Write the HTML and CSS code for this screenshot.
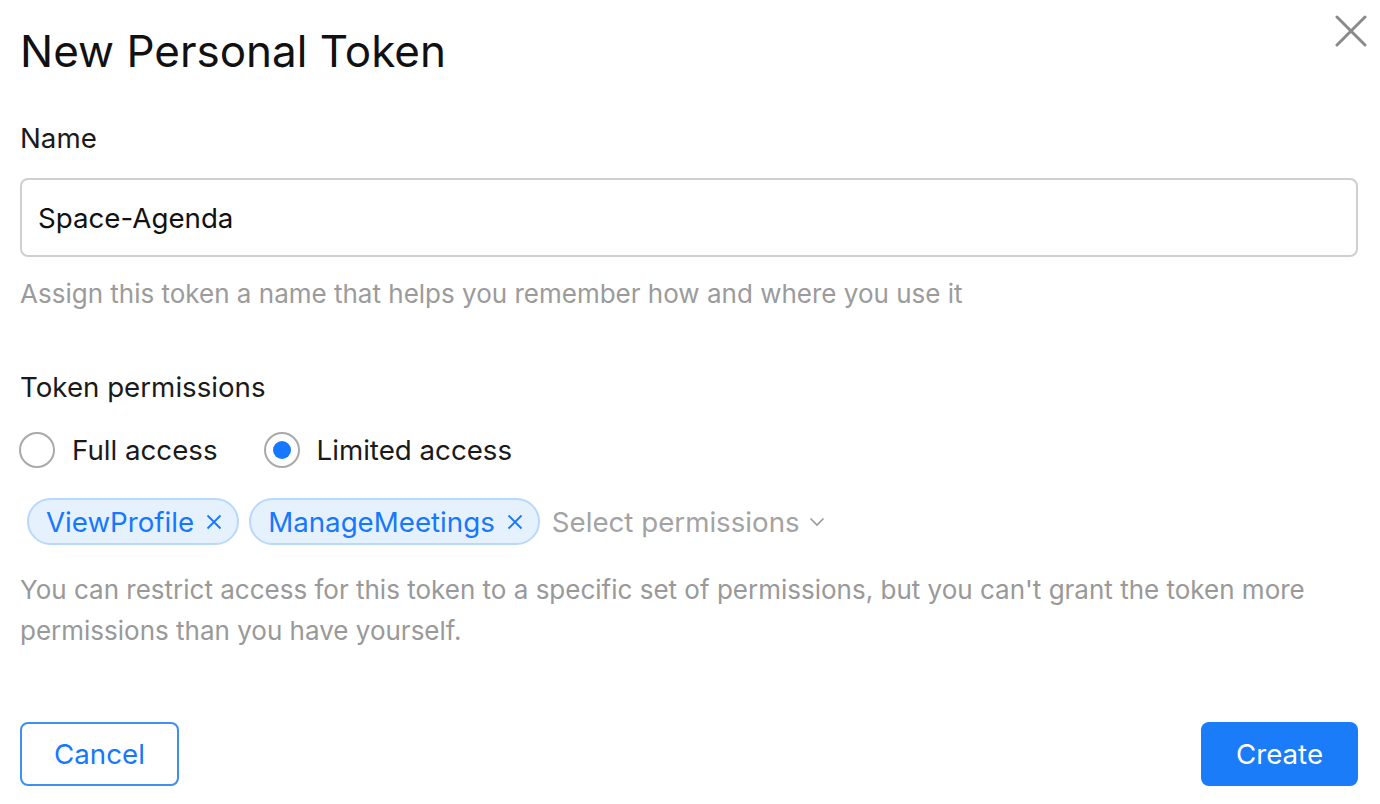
FILE: index.html
```html
<!DOCTYPE html>
<html>
<head>
<meta charset="utf-8">
<link rel="stylesheet" href="styles.css">
</head>
<body>
<div class="dialog">
  <div class="header">
    <h1 class="title">New Personal Token</h1>
    <button class="close" aria-label="Close">
      <svg width="32" height="32" viewBox="0 0 32 32"><path d="M2 2 L30 30 M30 2 L2 30" stroke="#8a8a8a" stroke-width="3" fill="none" stroke-linecap="round"/></svg>
    </button>
  </div>

  <div class="label name-label">Name</div>
  <div class="input">Space-Agenda</div>
  <div class="help">Assign this token a name that helps you remember how and where you use it</div>

  <div class="label perm-label">Token permissions</div>
  <div class="radios">
    <label class="radio"><span class="circle"></span><span>Full access</span></label>
    <label class="radio checked"><span class="circle"></span><span>Limited access</span></label>
  </div>

  <div class="select">
    <span class="tag">ViewProfile<svg class="x" width="16" height="16" viewBox="0 0 16 16"><path d="M1.5 1.5 L14.5 14.5 M14.5 1.5 L1.5 14.5" stroke="#1677ff" stroke-width="1.8" fill="none"/></svg></span>
    <span class="tag">ManageMeetings<svg class="x" width="16" height="16" viewBox="0 0 16 16"><path d="M1.5 1.5 L14.5 14.5 M14.5 1.5 L1.5 14.5" stroke="#1677ff" stroke-width="1.8" fill="none"/></svg></span>
    <span class="placeholder">Select permissions</span>
    <svg class="chev" width="16" height="10" viewBox="0 0 16 10"><path d="M1.5 1.5 L8 8 L14.5 1.5" stroke="#9a9a9a" stroke-width="1.6" fill="none"/></svg>
  </div>

  <p class="desc">You can restrict access for this token to a specific set of permissions, but you can't grant the token more permissions than you have yourself.</p>

  <div class="footer">
    <button class="btn cancel">Cancel</button>
    <button class="btn create">Create</button>
  </div>
</div>
</body>
</html>
```

FILE: styles.css
```css
html, body {
  margin: 0;
  padding: 0;
  background: #ffffff;
}
body {
  font-family: Inter, "Noto Sans", sans-serif;
  color: #1a1a1a;
  width: 1380px;
  height: 804px;
  overflow: hidden;
}
.dialog {
  padding: 0 22px 0 20px;
  display: flex;
  flex-direction: column;
}
.header {
  display: flex;
  justify-content: space-between;
  align-items: flex-start;
}
.title {
  margin: 24px 0 0 0;
  font-size: 44px;
  font-weight: 400;
  line-height: 54px;
  color: #111;
}
.close {
  margin: 14px -10px 0 0;
  padding: 0;
  border: 0;
  background: none;
  width: 34px;
  height: 34px;
  display: flex;
  align-items: center;
  justify-content: center;
}
.label {
  font-size: 27.7px;
  line-height: 32px;
  color: #1a1a1a;
}
.name-label {
  margin-top: 44px;
}
.input {
  margin-top: 24px;
  height: 79px;
  box-sizing: border-box;
  border: 2px solid #cfcfcf;
  border-radius: 8px;
  padding: 0 16px;
  display: flex;
  align-items: center;
  font-size: 27.7px;
  color: #111;
}
.help {
  margin-top: 21px;
  font-size: 26px;
  line-height: 32px;
  color: #9b9b9b;
}
.perm-label {
  margin-top: 61px;
}
.radios {
  margin-top: 29px;
  display: flex;
  gap: 46px;
  align-items: center;
}
.radio {
  display: flex;
  align-items: center;
  gap: 17px;
  font-size: 27.7px;
  line-height: 36px;
  color: #1a1a1a;
}
.radio:first-child {
  margin-left: -1px;
}
.circle {
  width: 36px;
  height: 36px;
  box-sizing: border-box;
  border: 2px solid #a9a9a9;
  border-radius: 50%;
  display: flex;
  align-items: center;
  justify-content: center;
}
.checked .circle::after {
  content: "";
  width: 18px;
  height: 18px;
  border-radius: 50%;
  background: #1677ff;
}
.select {
  margin-top: 30px;
  display: flex;
  align-items: center;
  gap: 10px;
  padding-left: 7px;
}
.tag {
  height: 47px;
  box-sizing: border-box;
  border: 2px solid #b9d8fb;
  background: #e6f1fe;
  border-radius: 24px;
  padding: 0 15px 0 17px;
  display: flex;
  align-items: center;
  font-size: 27.7px;
  color: #1677ff;
}
.x {
  margin-left: 12px;
}
.placeholder {
  margin-left: 2px;
  font-size: 27.7px;
  color: #a3a3a3;
}
.chev {
  margin-left: -1px;
}
.desc {
  margin: 24px 0 0 0;
  font-size: 26px;
  line-height: 41px;
  color: #999;
  max-width: 1320px;
}
.footer {
  margin-top: 71px;
  display: flex;
  justify-content: space-between;
}
.btn {
  font-family: Inter, "Noto Sans", sans-serif;
  font-size: 27.7px;
  height: 64px;
  box-sizing: border-box;
  border-radius: 8px;
  padding: 0;
}
.cancel {
  width: 159px;
  border: 2px solid #3e8ff0;
  background: #fff;
  color: #1677ff;
}
.create {
  width: 157px;
  border: 0;
  background: #1a7cf8;
  color: #fff;
}
```
